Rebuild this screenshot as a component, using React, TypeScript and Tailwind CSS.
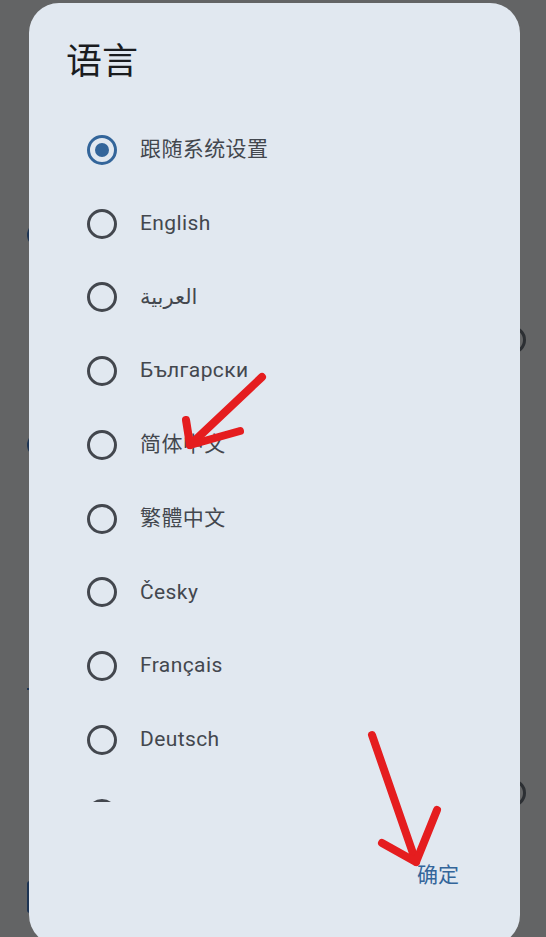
import React from 'react';

const languages = [
  '跟随系统设置',
  'English',
  'العربية',
  'Български',
  '简体中文',
  '繁體中文',
  'Česky',
  'Français',
  'Deutsch',
  '',
];

const font = { fontFamily: 'Roboto, "Noto Sans CJK SC", "DejaVu Sans", sans-serif' };

const Radio = ({ checked }: { checked: boolean }) => (
  <span
    className={
      'flex items-center justify-center w-[30px] h-[30px] rounded-full border-[3px] shrink-0 ' +
      (checked ? 'border-[#33659a]' : 'border-[#43474e]')
    }
  >
    {checked && <span className="w-[14px] h-[14px] rounded-full bg-[#33659a]" />}
  </span>
);

export default function App() {
  const selected = 0;

  return (
    <div className="relative w-[546px] h-[937px] overflow-hidden bg-[#636465]" style={font}>
      {/* page behind the scrim */}
      <div className="flex flex-col">
        <div className="h-[223px]" />
        <div className="h-[24px] flex">
          <span className="ml-[27px] w-[24px] h-[24px] rounded-full bg-[#1d3453]" />
        </div>
        <div className="h-[79px]" />
        <div className="h-[28px] flex justify-end">
          <span className="mr-[20px] w-[28px] h-[28px] rounded-full border-[3px] border-[#2c2f33]" />
        </div>
        <div className="h-[79px]" />
        <div className="h-[24px] flex">
          <span className="ml-[27px] w-[24px] h-[24px] rounded-full bg-[#1d3453]" />
        </div>
        <div className="h-[231px]" />
        <div className="h-[3px] flex">
          <span className="ml-[27px] w-[20px] h-[2px] bg-[#1d3453]" />
        </div>
        <div className="h-[88px]" />
        <div className="h-[28px] flex justify-end">
          <span className="mr-[20px] w-[28px] h-[28px] rounded-full border-[3px] border-[#2c2f33]" />
        </div>
        <div className="h-[74px]" />
        <div className="h-[32px] flex">
          <span className="ml-[27px] w-[40px] h-[32px] rounded-l-[3px] border-l-[2px] border-[#1d3453]" />
        </div>
      </div>

      {/* dialog */}
      <div className="absolute left-[29px] top-[3px] w-[491px] h-[942px] rounded-[30px] bg-[#e1e8f0] flex flex-col">
        <h2 className="pt-[35px] pl-[37px] text-[36px] leading-[48px] text-[#1a1c1f]">语言</h2>
        <div className="mt-[27px] h-[689px] overflow-hidden">
          {languages.map((l, i) => (
            <div key={i} className="h-[73.75px] flex items-center pl-[58px]">
              <Radio checked={i === selected} />
              {l && <span className="ml-[23px] text-[21px] tracking-[0.4px] text-[#43474e]">{l}</span>}
            </div>
          ))}
        </div>
        <div className="flex justify-end pr-[61px] pt-[59px]">
          <span className="text-[21px] leading-[28px] text-[#33659a]">确定</span>
        </div>
      </div>

      {/* red annotation arrows */}
      <svg className="absolute inset-0 pointer-events-none" width="546" height="937" viewBox="0 0 546 937">
        <g fill="none" stroke="#e51d1f" strokeWidth="8" strokeLinecap="round" strokeLinejoin="round">
          <path d="M262 377 L190 445" />
          <path d="M186 420 L190 445 L240 431" />
          <path d="M372 735 L416 862" />
          <path d="M382 843 L416 862 L437 810" />
        </g>
      </svg>
    </div>
  );
}
